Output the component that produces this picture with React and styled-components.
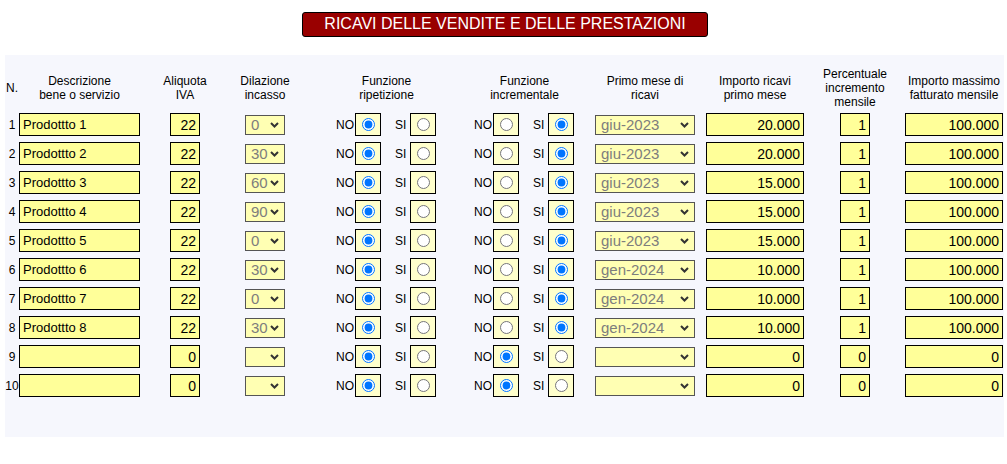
import React from "react";
import styled, { createGlobalStyle } from "styled-components";

/*-------------- Global --------------------*/
const GlobalStyle = createGlobalStyle`
  body {
    margin: 0;
    background: #ffffff;
    font-family: Arial, "Liberation Sans", Helvetica, sans-serif;
    color: #000;
  }
`;

/*-------------- Data --------------------*/
// track = total width of the column, w = width of the control in it
const columns = [
  { track: 14, w: 14, label: ["N."] },
  { track: 121, w: 121, label: ["Descrizione", "bene o servizio"] },
  { track: 60, w: 30, label: ["Aliquota", "IVA"] },
  { track: 85, w: 40, label: ["Dilazione", "incasso"] },
  { track: 152, w: 101, label: ["Funzione", "ripetizione"] },
  { track: 138, w: 101, label: ["Funzione", "incrementale"] },
  { track: 120, w: 100, label: ["Primo mese di", "ricavi"] },
  { track: 109, w: 98, label: ["Importo ricavi", "primo mese"] },
  { track: 66, w: 30, label: ["Percentuale", "incremento", "mensile"] },
  { track: 133, w: 98, label: ["Importo massimo", "fatturato mensile"] },
];

const rows = [
  { name: "Prodottto 1", iva: "22", dil: "0", rip: "NO", inc: "SI", mese: "giu-2023", imp: "20.000", perc: "1", max: "100.000" },
  { name: "Prodottto 2", iva: "22", dil: "30", rip: "NO", inc: "SI", mese: "giu-2023", imp: "20.000", perc: "1", max: "100.000" },
  { name: "Prodottto 3", iva: "22", dil: "60", rip: "NO", inc: "SI", mese: "giu-2023", imp: "15.000", perc: "1", max: "100.000" },
  { name: "Prodottto 4", iva: "22", dil: "90", rip: "NO", inc: "SI", mese: "giu-2023", imp: "15.000", perc: "1", max: "100.000" },
  { name: "Prodottto 5", iva: "22", dil: "0", rip: "NO", inc: "SI", mese: "giu-2023", imp: "15.000", perc: "1", max: "100.000" },
  { name: "Prodottto 6", iva: "22", dil: "30", rip: "NO", inc: "SI", mese: "gen-2024", imp: "10.000", perc: "1", max: "100.000" },
  { name: "Prodottto 7", iva: "22", dil: "0", rip: "NO", inc: "SI", mese: "gen-2024", imp: "10.000", perc: "1", max: "100.000" },
  { name: "Prodottto 8", iva: "22", dil: "30", rip: "NO", inc: "SI", mese: "gen-2024", imp: "10.000", perc: "1", max: "100.000" },
  { name: "", iva: "0", dil: "", rip: "NO", inc: "NO", mese: "", imp: "0", perc: "0", max: "0" },
  { name: "", iva: "0", dil: "", rip: "NO", inc: "NO", mese: "", imp: "0", perc: "0", max: "0" },
];

/*-------------- Title --------------------*/
const TitleBar = styled.div`
  display: flex;
  justify-content: center;
  padding: 12px 0 0 3px;
`;

const TitleBox = styled.h1`
  margin: 0;
  box-sizing: border-box;
  width: 406px;
  height: 25px;
  padding-bottom: 2px;
  background: #990000;
  border: 1px solid #000;
  border-radius: 3px;
  color: #fff;
  font-size: 16px;
  font-weight: normal;
  line-height: 21px;
  text-align: center;
`;

/*-------------- Table --------------------*/
const Panel = styled.div`
  display: grid;
  grid-template-columns: ${columns.map((c) => c.track + "px").join(" ")};
  grid-template-rows: 45px repeat(${rows.length}, 29px);
  margin: 18px 3px 0 5px;
  padding: 10px 0 37px;
  background: #f6f7fd;
`;

const HeadCell = styled.div`
  justify-self: ${(p) => (p.$first ? "center" : "end")};
  width: ${(p) => p.$w}px;
  display: flex;
  justify-content: center;
  align-items: center;
  font-size: 12px;
  line-height: 14px;
  text-align: center;
  white-space: nowrap;
`;

const RowNum = styled.div`
  justify-self: center;
  align-self: center;
  font-size: 12px;
`;

const Cell = styled.div`
  justify-self: end;
  align-self: center;
  width: ${(p) => p.$w}px;
  display: flex;
  align-items: center;
`;

const TextInput = styled.input`
  box-sizing: border-box;
  width: 100%;
  height: 23px;
  margin: 0;
  padding: 0 3px;
  border: 1px solid #000;
  border-radius: 0;
  background: #ffff99;
  color: #000;
  font-family: Arial, "Liberation Sans", sans-serif;
  font-size: ${(p) => (p.$num ? 14 : 13)}px;
  text-align: ${(p) => (p.$num ? "right" : "left")};
  outline: none;
`;

const SelectWrap = styled.div`
  position: relative;
  width: 100%;
  height: 20px;
`;

const Select = styled.select`
  box-sizing: border-box;
  width: 100%;
  height: 20px;
  margin: 0;
  padding: 0 0 0 5px;
  appearance: none;
  border: 1px solid #555;
  border-radius: 0;
  background: #ffffb3;
  color: #7d7d7d;
  font-family: Arial, "Liberation Sans", sans-serif;
  font-size: 15px;
  outline: none;
`;

const Chevron = styled.svg`
  position: absolute;
  right: 6px;
  top: 7px;
  pointer-events: none;
`;

const RadioLabel = styled.span`
  font-size: 12px;
  margin-left: ${(p) => p.$ml || 0}px;
  margin-right: ${(p) => p.$mr || 0}px;
`;

const RadioBox = styled.label`
  box-sizing: border-box;
  width: 26px;
  height: 23px;
  display: flex;
  align-items: center;
  justify-content: center;
  border: 1px solid #000;
  background: #ffffcc;

  input {
    margin: 0;
    width: 13px;
    height: 13px;
  }
`;

/*-------------- Parts --------------------*/
const FakeSelect = ({ value }) => (
  <SelectWrap>
    <Select value={value} onChange={() => {}}>
      <option value={value}>{value}</option>
    </Select>
    <Chevron width="9" height="6" viewBox="0 0 9 6">
      <path d="M1 1 L4.5 4.5 L8 1" fill="none" stroke="#333" strokeWidth="2" />
    </Chevron>
  </SelectWrap>
);

const YesNo = ({ name, value }) => (
  <>
    <RadioLabel $mr={1}>NO</RadioLabel>
    <RadioBox>
      <input type="radio" name={name} defaultChecked={value === "NO"} />
    </RadioBox>
    <RadioLabel $ml={14} $mr={4}>SI</RadioLabel>
    <RadioBox>
      <input type="radio" name={name} defaultChecked={value === "SI"} />
    </RadioBox>
  </>
);

/*------------- Main Component ------------------*/
const App = () => {
  return (
    <>
      <GlobalStyle />
      <TitleBar>
        <TitleBox>RICAVI DELLE VENDITE E DELLE PRESTAZIONI</TitleBox>
      </TitleBar>
      <Panel>
        {columns.map((c, i) => (
          <HeadCell key={i} $w={c.w} $first={i === 0}>
            <span>
              {c.label.map((l, j) => (
                <React.Fragment key={j}>
                  {j > 0 && <br />}
                  {l}
                </React.Fragment>
              ))}
            </span>
          </HeadCell>
        ))}
        {rows.map((r, i) => (
          <React.Fragment key={i}>
            <RowNum>{i + 1}</RowNum>
            <Cell $w={columns[1].w}>
              <TextInput defaultValue={r.name} />
            </Cell>
            <Cell $w={columns[2].w}>
              <TextInput $num defaultValue={r.iva} />
            </Cell>
            <Cell $w={columns[3].w}>
              <FakeSelect value={r.dil} />
            </Cell>
            <Cell $w={columns[4].w}>
              <YesNo name={`rip${i}`} value={r.rip} />
            </Cell>
            <Cell $w={columns[5].w}>
              <YesNo name={`inc${i}`} value={r.inc} />
            </Cell>
            <Cell $w={columns[6].w}>
              <FakeSelect value={r.mese} />
            </Cell>
            <Cell $w={columns[7].w}>
              <TextInput $num defaultValue={r.imp} />
            </Cell>
            <Cell $w={columns[8].w}>
              <TextInput $num defaultValue={r.perc} />
            </Cell>
            <Cell $w={columns[9].w}>
              <TextInput $num defaultValue={r.max} />
            </Cell>
          </React.Fragment>
        ))}
      </Panel>
    </>
  );
};

export default App;
